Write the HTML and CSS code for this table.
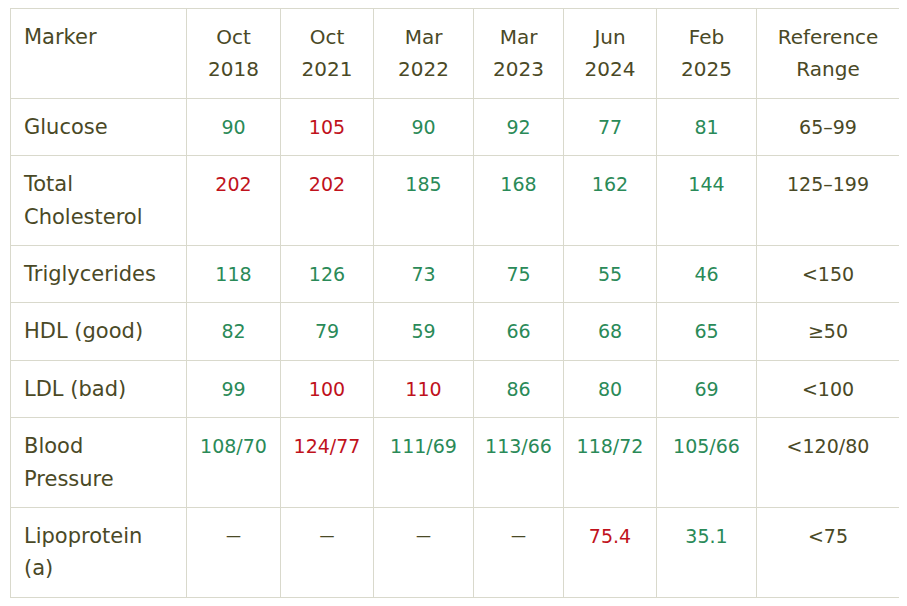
FILE: index.html
```html
<!DOCTYPE html>
<html lang="en">
<head>
<meta charset="utf-8">
<title>Lab markers</title>
<link rel="stylesheet" href="styles.css">
</head>
<body>
<table class="labs">
  <colgroup>
    <col class="c-marker">
    <col class="c-1">
    <col class="c-2">
    <col class="c-3">
    <col class="c-4">
    <col class="c-5">
    <col class="c-6">
    <col class="c-ref">
  </colgroup>
  <thead>
    <tr>
      <th class="name">Marker</th>
      <th>Oct<br>2018</th>
      <th>Oct<br>2021</th>
      <th>Mar<br>2022</th>
      <th>Mar<br>2023</th>
      <th>Jun<br>2024</th>
      <th>Feb<br>2025</th>
      <th>Reference<br>Range</th>
    </tr>
  </thead>
  <tbody>
    <tr>
      <td class="name">Glucose</td>
      <td class="ok">90</td><td class="hi">105</td><td class="ok">90</td><td class="ok">92</td><td class="ok">77</td><td class="ok">81</td>
      <td>65–99</td>
    </tr>
    <tr>
      <td class="name">Total<br>Cholesterol</td>
      <td class="hi">202</td><td class="hi">202</td><td class="ok">185</td><td class="ok">168</td><td class="ok">162</td><td class="ok">144</td>
      <td>125–199</td>
    </tr>
    <tr>
      <td class="name">Triglycerides</td>
      <td class="ok">118</td><td class="ok">126</td><td class="ok">73</td><td class="ok">75</td><td class="ok">55</td><td class="ok">46</td>
      <td>&lt;150</td>
    </tr>
    <tr>
      <td class="name">HDL (good)</td>
      <td class="ok">82</td><td class="ok">79</td><td class="ok">59</td><td class="ok">66</td><td class="ok">68</td><td class="ok">65</td>
      <td>≥50</td>
    </tr>
    <tr>
      <td class="name">LDL (bad)</td>
      <td class="ok">99</td><td class="hi">100</td><td class="hi">110</td><td class="ok">86</td><td class="ok">80</td><td class="ok">69</td>
      <td>&lt;100</td>
    </tr>
    <tr>
      <td class="name">Blood<br>Pressure</td>
      <td class="ok">108/70</td><td class="hi">124/77</td><td class="ok">111/69</td><td class="ok">113/66</td><td class="ok">118/72</td><td class="ok">105/66</td>
      <td>&lt;120/80</td>
    </tr>
    <tr>
      <td class="name">Lipoprotein<br>(a)</td>
      <td class="na">—</td><td class="na">—</td><td class="na">—</td><td class="na">—</td><td class="hi">75.4</td><td class="ok">35.1</td>
      <td>&lt;75</td>
    </tr>
  </tbody>
</table>
</body>
</html>
```

FILE: styles.css
```css
html, body {
  background: #ffffff;
}
body {
  margin: 8px 8px 0 10px;
  font-family: "DejaVu Sans", "Noto Sans", sans-serif;
  color: #4a4926;
}
.labs {
  border-collapse: collapse;
  table-layout: fixed;
  width: 889px;
  font-size: 19px;
  line-height: 32.4px;
}
.c-marker { width: 176px; }
.c-1 { width: 94px; }
.c-2 { width: 93px; }
.c-3 { width: 100px; }
.c-4 { width: 90px; }
.c-5 { width: 93px; }
.c-6 { width: 100px; }
.c-ref { width: 143px; }

.labs th,
.labs td {
  border: 1px solid #d9d9cc;
  padding: 12px 4px;
  text-align: center;
  vertical-align: top;
  font-weight: normal;
  white-space: nowrap;
}
.labs th {
  font-size: 20px;
}
.labs .name {
  text-align: left;
  padding-left: 13px;
  font-size: 21px;
}
.ok { color: #2a8a58; }
.hi { color: #c0121c; }
.na { font-size: 15px; }
```
